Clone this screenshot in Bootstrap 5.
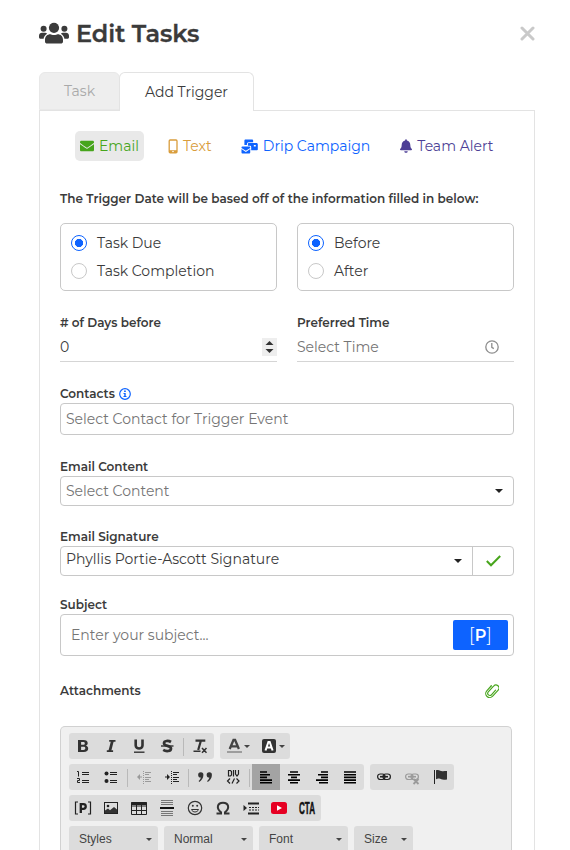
<!DOCTYPE html>
<html lang="en">
<head>
<meta charset="utf-8">
<meta name="viewport" content="width=device-width, initial-scale=1">
<title>Edit Tasks</title>
<link href="https://cdn.jsdelivr.net/npm/bootstrap@5.3.0/dist/css/bootstrap.min.css" rel="stylesheet">
<style>
body{font-family:Montserrat,Inter,"Liberation Sans",sans-serif;font-size:14px;line-height:20px;color:#3b3b3b;background:#fff}
svg{display:block;flex:none}
.page-wrap{width:496px;margin-left:39px}
.head-row{height:72px;padding-top:17px}
.head-row h1{font-size:24px;font-weight:600;line-height:34px;letter-spacing:-.08px;margin:0 0 0 7px;color:#3b3b3b;-webkit-text-stroke:.3px #3b3b3b}
.close-x{margin:9px 0 0;color:#c9c9c9}
.trigger-tabs{height:39px;border:0;position:relative;z-index:1;flex-wrap:nowrap}
.trigger-tabs .nav-link{padding:0;margin:0;height:38px;line-height:37px;text-align:center;border-radius:6px 6px 0 0;border:1px solid #e3e3e3}
.trigger-tabs .tab-task{width:81px;background:#eee;color:#a9a9a9;border-color:#e8e8e8}
.trigger-tabs .tab-add{width:135px;height:39px;line-height:38px;margin-left:-1px;background:#fff;color:#3b3b3b;border-bottom:0}
.panel-box{border:1px solid #e3e3e3;border-bottom:0;margin-top:-1px;padding:20px 20px 0;height:740px}
.kinds{height:30px;margin:0 13px 0 15px;gap:19px}
.kind{height:30px;padding:0 5px;border-radius:5px;white-space:nowrap;text-decoration:none;gap:5px}
.k-email{width:69px;background:#e9e9e9;color:#47a51c}
.k-text{width:54px;color:#d99d3c}
.k-drip{width:140px;color:#0d63ff}
.k-team{width:106px;color:#4d3f96;margin-left:1px}
.lbl{font-size:12px;font-weight:650;line-height:16px;margin:0;white-space:nowrap}
.lead-note{margin-top:30px;letter-spacing:.02px}
.cards-row{margin-top:16px}
.inputs-row{margin-top:24px}
.radio-card{width:217px;height:68px;border:1px solid #c8c8c8;border-radius:5px;padding:5px 10px}
.radio-card .form-check{height:28px;padding:0;margin:0;min-height:0;display:flex;align-items:center;gap:10px}
.radio-card .form-check-input{float:none;margin:0;width:16px;height:16px;border:1px solid #c8c8c8;box-shadow:none}
.radio-card .form-check-input:checked{background-color:#fff;border-color:#0d63ff;background-image:radial-gradient(circle,#0d63ff 0 3.8px,transparent 4.4px)}
.half{width:217px}
.line-field{height:31px;border-bottom:1px solid #d5d5d5}
.line-field .form-control{border:0;padding:2px 0 0;height:28px;background:none}
.line-field svg{margin-top:1px}
.form-control{font-size:14px;line-height:20px;color:#3b3b3b;border-color:#c8c8c8;border-radius:4px;box-shadow:none!important}
.form-control::placeholder{color:#757575;opacity:1}
.spin{width:15px;height:18px;background:#eee}
.field{border:1px solid #c8c8c8;border-radius:4px;padding:0 5px;width:454px;margin-top:1px}
.field .form-control{border:0;padding:0;background:none}
.f-contact{height:32px}
.f-content{height:30px;padding-right:10px}
.f-sign{height:30px;padding-right:0}
.f-subject{height:42px;padding-left:10px}
.gap-a{margin-top:24px}
.gap-b{margin-top:23px}
.gap-c{margin-top:21px}
.att-row{margin-top:27px;height:16px}
.icon-end{margin-right:15px}
.caret-d{width:0;height:0;border:4px solid transparent;border-top-color:#222;border-bottom:0}
.caret-sign{margin-right:10px}
.ok-cell{width:41px;height:28px;border-left:1px solid #c8c8c8}
.sig-text{margin-top:-4px}
.p-btn{width:55px;height:30px;border-radius:2px;background:#0d63ff;color:#fff;font-size:16px;font-weight:650;border:0;padding:0;line-height:28px}
.p-btn span{font-weight:300;font-size:19px}
.editor{width:452px;height:124px;background:#f0f0f0;border:1px solid #d1d1d1;border-bottom:0;border-radius:5px 5px 0 0;padding:6px 8px 0;margin-top:27px;font-family:"Liberation Sans",Arial,sans-serif;font-size:12px;color:#444}
.tb-row{display:flex;gap:6px;margin-bottom:5px;height:26px}
.tb-row:last-child{height:24px;margin:0}
.tb-group{display:flex;background:#dcdcdc;border-radius:3px;height:26px}
.tb{width:28px;height:26px;display:flex;align-items:center;justify-content:center;color:#222}
.tb-wide{width:35px;gap:2px}
.tb-off{opacity:.35}
.tb-on{background:#a3a3a3}
.tb-sep{width:1px;height:18px;background:#b9b9b9;margin:5px 2px 0}
.tb-arrow{width:0;height:0;border:3px solid transparent;border-top-color:#444;border-bottom:0}
.combo{height:24px;display:flex;align-items:center;justify-content:space-between;padding:2px 6px 0 10px;background:#dcdcdc;border-radius:3px 3px 0 0}
.w89{width:89px}.w59{width:59px}
</style>
<script src="https://cdn.jsdelivr.net/npm/bootstrap@5.3.0/dist/js/bootstrap.bundle.min.js"></script>
</head>
<body>
<main class="page-wrap">
  <header class="head-row d-flex align-items-start">
    <svg class="mt-1" width="30" height="24" viewBox="0 0 30 24" fill="#3b3b3b"><circle cx="15" cy="6.800" r="5.100"/><circle cx="4.600" cy="7.700" r="3"/><circle cx="25.400" cy="7.700" r="3"/><path d="M6 20.400v-1.600c0-3.300 2.300-5.500 5.400-5.500.8 0 1.800.8 3.600.8s2.800-.8 3.600-.8c3.100 0 5.400 2.200 5.400 5.500v1.600c0 1.300-1 2.200-2.200 2.200H8.200C7 22.600 6 21.700 6 20.400z"/><path d="M0 16.300v-1.500c0-1.700 1.300-3 3-3h3c.8 0 1.600.3 2.100.9-2 1.100-3.200 2.900-3.500 5.100H1.500c-.8 0-1.500-.7-1.500-1.500zM30 16.300v-1.500c0-1.700-1.300-3-3-3h-3c-.8 0-1.600.3-2.100.9 2 1.100 3.200 2.900 3.500 5.100h3.100c.8 0 1.500-.7 1.500-1.500z"/></svg>
    <h1>Edit Tasks</h1>
    <svg class="close-x ms-auto" width="15" height="15" viewBox="0 0 15 15" fill="none" stroke="currentColor" stroke-width="3" stroke-linecap="round"><path d="M2 2l11 11M13 2L2 13"/></svg>
  </header>
  <nav class="nav nav-tabs trigger-tabs">
    <a class="nav-link tab-task">Task</a>
    <a class="nav-link tab-add">Add Trigger</a>
  </nav>
  <section class="panel-box">
    <div class="kinds d-flex">
      <a class="kind k-email d-flex align-items-center"><svg width="14" height="14" viewBox="0 0 512 512" fill="currentColor"><path d="M502.300 190.800c3.900-3.100 9.700-.2 9.700 4.700V400c0 26.500-21.500 48-48 48H48c-26.500 0-48-21.500-48-48V195.600c0-5 5.700-7.800 9.700-4.700 22.400 17.400 52.100 39.500 154.100 113.600 21.100 15.400 56.700 47.800 92.200 47.600 35.700.3 72-32.800 92.300-47.600 102-74.100 131.600-96.300 154-113.700zM256 320c23.200.4 56.600-29.200 73.400-41.400 132.700-96.300 142.800-104.700 173.400-128.700 5.800-4.500 9.200-11.500 9.200-18.900v-19c0-26.500-21.500-48-48-48H48c-26.500 0-48 21.500-48 48v19c0 7.400 3.400 14.300 9.200 18.900 30.600 23.900 40.700 32.400 173.400 128.700 16.800 12.200 50.200 41.800 73.400 41.400z"/></svg><span>Email</span></a>
      <a class="kind k-text d-flex align-items-center"><svg width="10" height="15" viewBox="0 0 10 15"><rect x="1.200" y="1" width="7.800" height="12.800" rx="1" fill="none" stroke="currentColor" stroke-width="1.300"/><path d="M1 11.200h8v2.800H1z" fill="currentColor"/><circle cx="5" cy="12.500" r=".8" fill="#fff"/></svg><span>Text</span></a>
      <a class="kind k-drip d-flex align-items-center"><svg width="17" height="15" viewBox="-.5 0 17.500 15" fill="currentColor"><path d="M3 6V1.400C3 .7 3.500.2 4.200.2h6.600c.7 0 1.200.5 1.200 1.200V3H7.500C6.200 3 5.600 3.800 5.600 5v1z"/><path fill-rule="evenodd" d="M7.700 4h7.600c.9 0 1.500.6 1.500 1.500v5c0 .5-.4.900-.9.900H10V8.200C10 7.300 9.400 6.800 8.500 6.800H6.600V5.100C6.600 4.400 7 4 7.700 4zm5 2v1.600h2V6z"/><path d="M0 8.500C0 8 .4 7.600.9 7.600h7.200c.5 0 .9.400.9.900v.6L4.500 12 0 9.100zM0 10.200l4.500 2.900L9 10.200v3.600c0 .6-.4 1-.9 1H.9c-.5 0-.9-.4-.9-1z"/></svg><span>Drip Campaign</span></a>
      <a class="kind k-team d-flex align-items-center"><svg width="12" height="14" viewBox="0 0 448 512" fill="currentColor"><path d="M224 512c35.300 0 63.900-28.700 63.900-64H160.100c0 35.300 28.600 64 63.900 64zm215.400-149.700c-19.300-20.800-55.500-52-55.500-154.300 0-77.700-54.500-139.900-127.900-155.200V32c0-17.700-14.300-32-32-32s-32 14.300-32 32v20.800C118.600 68.100 64.100 130.300 64.100 208c0 102.300-36.200 133.500-55.500 154.300-6 6.400-8.700 14.200-8.600 21.700.1 16.400 13 32 32.100 32h383.800c19.100 0 32-15.600 32.100-32 .1-7.500-2.600-15.300-8.600-21.700z"/></svg><span>Team Alert</span></a>
    </div>
    <p class="lbl lead-note">The Trigger Date will be based off of the information filled in below:</p>
    <div class="cards-row d-flex justify-content-between">
      <div class="radio-card">
        <label class="form-check"><input class="form-check-input" type="radio" name="basis" checked><span>Task Due</span></label>
        <label class="form-check"><input class="form-check-input" type="radio" name="basis"><span>Task Completion</span></label>
      </div>
      <div class="radio-card">
        <label class="form-check"><input class="form-check-input" type="radio" name="when" checked><span>Before</span></label>
        <label class="form-check"><input class="form-check-input" type="radio" name="when"><span>After</span></label>
      </div>
    </div>
    <div class="inputs-row d-flex justify-content-between">
      <div class="half"><label class="lbl d-block"># of Days before</label>
        <div class="line-field d-flex align-items-center"><input class="form-control" value="0"><svg class="spin" viewBox="0 0 15 18"><path d="M3.500 7L7.500 3l4 4zM3.500 11l4 4 4-4z" fill="#333"/></svg></div></div>
      <div class="half"><label class="lbl d-block">Preferred Time</label>
        <div class="line-field d-flex align-items-center"><input class="form-control" placeholder="Select Time"><svg class="icon-end" width="14" height="14" viewBox="0 0 14 14" fill="none" stroke="#8d8d8d" stroke-width="1.300"><circle cx="7" cy="7" r="6.200"/><path d="M6.800 3v4.300l2 1.300"/></svg></div></div>
    </div>
    <label class="lbl d-flex align-items-center gap-a"><span>Contacts</span><svg class="ms-1" width="12" height="12" viewBox="0 0 12 12"><circle cx="6" cy="6" r="5.300" fill="none" stroke="#0d63ff" stroke-width="1.200"/><path d="M5.100 2.500h1.700v1.500H5.100zM4.500 5h2.200v3h.8v1.100h-3V8h.8V6.100h-.8z" fill="#0d63ff"/></svg></label>
    <div class="field f-contact d-flex align-items-center"><input class="form-control" placeholder="Select Contact for Trigger Event"></div>
    <label class="lbl d-block gap-a">Email Content</label>
    <div class="field f-content d-flex align-items-center"><input class="form-control" placeholder="Select Content"><i class="caret-d"></i></div>
    <label class="lbl d-block gap-b">Email Signature</label>
    <div class="field f-sign d-flex align-items-center"><span class="flex-grow-1 sig-text">Phyllis Portie-Ascott Signature</span><i class="caret-d caret-sign"></i><span class="ok-cell d-flex align-items-center justify-content-center"><svg width="15" height="12" viewBox="0 0 15 12" fill="none" stroke="#47a51c" stroke-width="2"><path d="M.8 6l4.200 4.300L14.200 1"/></svg></span></div>
    <label class="lbl d-block gap-c">Subject</label>
    <div class="field f-subject d-flex align-items-center"><input class="form-control" placeholder="Enter your subject..."><button class="p-btn flex-shrink-0" type="button"><span>[</span>P<span>]</span></button></div>
    <div class="att-row d-flex justify-content-between align-items-center"><span class="lbl">Attachments</span><svg class="icon-end" width="14" height="16" viewBox="0 0 14 16" fill="none" stroke="#47a51c" stroke-width="1.150" stroke-linecap="round"><g transform="rotate(42 7 8)"><path d="M9.100 5v6.200a2.100 2.100 0 01-4.200 0V3.700M4.900 3.700M3 5.200v6.200a4 4 0 008 0V3.200a3.050 3.050 0 00-6.100 0"/><path d="M3 5.200V4.500"/></g></svg></div>
    <div class="editor">
      <div class="tb-row">
        <div class="tb-group">
          <span class="tb"><svg width="16" height="16" viewBox="0 0 16 16"><path fill="#333" fill-rule="evenodd" d="M3 2h5.500c2.700 0 4.200 1.100 4.200 3.100 0 1.300-.7 2.200-1.900 2.600 1.500.3 2.400 1.300 2.400 2.800 0 2.200-1.600 3.500-4.400 3.500H3zm3.100 2.100v2.700h1.800c1.300 0 1.900-.4 1.900-1.400 0-.9-.6-1.300-1.900-1.300zm0 4.700v3.100h2.200c1.300 0 2-.5 2-1.600s-.7-1.500-2-1.500z"/></svg></span>
          <span class="tb"><svg width="16" height="16" viewBox="0 0 16 16" fill="none" stroke="#333"><path stroke-width="1.700" d="M6.200 2.800h6.300M3.800 13.200h6.300"/><path stroke-width="2.800" d="M9.500 2.500L6.700 13.500"/></svg></span>
          <span class="tb"><svg width="16" height="16" viewBox="0 0 16 16" fill="none" stroke="#333"><path stroke-width="2.600" d="M4.700 1.500v6c0 4 6.800 4 6.800 0v-6"/><path stroke-width="1.400" d="M3 14.200h10.500"/></svg></span>
          <span class="tb"><svg width="16" height="16" viewBox="0 0 16 16" fill="none" stroke="#333"><path stroke-width="2.700" d="M12 4C9.500 2.400 5 2.500 5 5.200c0 3.200 7 2.200 7 5.300 0 3-5 3.200-7.800 1.400"/><path stroke-width="1.400" d="M2 8h12.500"/></svg></span>
          <i class="tb-sep"></i>
          <span class="tb"><svg width="16" height="16" viewBox="0 0 16 16" fill="none" stroke="#333"><path stroke-width="2.200" d="M3.500 2.600h9.800M8.800 3L6.200 12"/><path stroke-width="1.500" d="M1.500 13.200h7M10 10l4.500 4.800M14.500 10L10 14.800"/></svg></span>
        </div>
        <div class="tb-group">
          <span class="tb tb-wide"><svg width="16" height="16" viewBox="0 0 16 16"><path d="M3.700 11L7.500 2h1.600l3.800 9M5.400 8.300h5.700" fill="none" stroke="#444" stroke-width="2.300"/><path d="M1 14h15" stroke="#888" stroke-width="1.500"/></svg><i class="tb-arrow"></i></span>
          <span class="tb tb-wide"><svg width="16" height="16" viewBox="0 0 16 16"><rect x="1" y="1" width="14" height="14" rx="2" fill="#333"/><path d="M4.500 12.500L7.400 4h1.300l2.900 8.500M5.700 9.600h4.600" fill="none" stroke="#fff" stroke-width="2"/></svg><i class="tb-arrow"></i></span>
        </div>
      </div>
      <div class="tb-row">
        <div class="tb-group">
          <span class="tb"><svg width="16" height="16" viewBox="0 0 16 16" fill="none" stroke="#222"><path d="M7 3.500h7M7 5.500h7M7 11.500h7M7 13.500h7M2 2.500h1.500v5M2 9.500h2.500v2h-2v2H5"/></svg></span>
          <span class="tb"><svg width="16" height="16" viewBox="0 0 16 16"><circle cx="3.500" cy="4.500" r="2" fill="#222"/><circle cx="3.500" cy="12" r="2" fill="#222"/><path d="M7 3.500h7M7 5.500h7M7 11.500h7M7 13.500h7" stroke="#222"/></svg></span>
          <i class="tb-sep"></i>
          <span class="tb tb-off"><svg width="16" height="16" viewBox="0 0 16 16" fill="none" stroke="#222"><path d="M9 3.500h6M9 5.500h4M9 8.500h6M9 10.500h4M9 12.500h6M2 8h4"/><path d="M7.500 2v13" stroke-dasharray="1 1"/><path fill="#222" stroke="none" d="M1 8l3-3v6z"/></svg></span>
          <span class="tb"><svg width="16" height="16" viewBox="0 0 16 16" fill="none" stroke="#222"><path d="M9 3.500h6M9 5.500h4M9 8.500h6M9 10.500h4M9 12.500h6M1 8h4"/><path d="M7.500 2v13" stroke-dasharray="1 1"/><path fill="#222" stroke="none" d="M6 8L3 5v6z"/></svg></span>
          <i class="tb-sep"></i>
          <span class="tb"><svg width="16" height="16" viewBox="0 0 16 16" fill="#333"><path d="M3.700 3.300a2.600 2.600 0 012.700 2.700c0 3-1.800 5.600-4.200 6.900l-.6-.8c1.300-1.100 2-2.300 2.200-3.600A2.600 2.600 0 113.700 3.300z"/><path d="M12.200 3.300a2.600 2.600 0 012.700 2.700c0 3-1.800 5.600-4.200 6.900l-.6-.8c1.300-1.100 2-2.300 2.200-3.600a2.600 2.600 0 11-.1-5.200z"/></svg></span>
          <span class="tb"><svg width="16" height="16" viewBox="0 0 16 16" fill="none" stroke="#222" stroke-width="1.200"><path d="M3.500 1v6h2l1-1V2.500l-1-1h-2M8.500 1v6.500M10.500 1v4l1.500 2 1.500-2V1M5 9.500L2.500 12 5 14.500M11.500 9.500L14 12l-2.500 2.500M9.500 9.500L7 14.500"/></svg></span>
          <i class="tb-sep"></i>
          <span class="tb tb-on"><svg width="16" height="16" viewBox="0 0 16 16" stroke="#000" stroke-width="1.600"><path d="M2 3h7M2 5.700h10M2 8.400h7M2 11.100h12M2 13.800h12"/></svg></span>
          <span class="tb"><svg width="16" height="16" viewBox="0 0 16 16" stroke="#000" stroke-width="1.600"><path d="M4 3h8M2 5.700h12M5 8.400h6M2 11.100h12M4 13.800h8"/></svg></span>
          <span class="tb"><svg width="16" height="16" viewBox="0 0 16 16" stroke="#000" stroke-width="1.600"><path d="M7 3h7M4 5.700h10M7 8.400h7M2 11.100h12M5 13.800h9"/></svg></span>
          <span class="tb"><svg width="16" height="16" viewBox="0 0 16 16" stroke="#000" stroke-width="1.600"><path d="M2 3h12M2 5.700h12M2 8.400h12M2 11.100h12M2 13.800h12"/></svg></span>
        </div>
        <div class="tb-group">
          <span class="tb"><svg width="16" height="16" viewBox="0 0 16 16" fill="none" stroke="#222" stroke-width="1.200"><rect x="1.600" y="5" width="7.400" height="5.500" rx="2.700"/><rect x="7" y="5" width="7.400" height="5.500" rx="2.700"/><path d="M4 7.700h8" stroke-width="1.600"/></svg></span>
          <span class="tb tb-off"><svg width="16" height="16" viewBox="0 0 16 16" fill="none" stroke="#222" stroke-width="1.200"><rect x="1.600" y="5" width="7.400" height="5.500" rx="2.700"/><rect x="7" y="5" width="7.400" height="5.500" rx="2.700"/><path d="M4 7.700h8" stroke-width="1.600"/><path d="M9.500 10l5 5M14.500 10l-5 5" stroke-width="1.800"/></svg></span>
          <span class="tb"><svg width="16" height="16" viewBox="0 0 16 16"><path d="M2.500 1v14" stroke="#222"/><path fill="#333" d="M4 1.300c3.500-1.200 4.500 1.400 7 .9.900-.1 2.300-.1 4-.2v8.400c-2.300.4-3.500.4-5 .2-2.500-.9-3.500-1.500-6-.4z"/></svg></span>
        </div>
      </div>
      <div class="tb-row">
        <div class="tb-group">
          <span class="tb"><svg width="18" height="16" viewBox="0 0 18 16" fill="none" stroke="#222"><path d="M4 2H1.500v12H4M14 2h2.500v12H14" stroke-width="1.200"/><path stroke-width="2.300" d="M6.800 13V4.200h2.600c3.100 0 3.100 4.600 0 4.600H7"/></svg></span>
          <span class="tb"><svg width="16" height="16" viewBox="0 0 16 16"><rect x="1.500" y="2.500" width="13" height="11" fill="none" stroke="#222"/><circle cx="5" cy="6" r="1.300" fill="#222"/><path d="M2 13V10.500l3-2 2 1.800 4-3.300 3 2.500V13z" fill="#333"/></svg></span>
          <span class="tb"><svg width="16" height="16" viewBox="0 0 16 16" fill="none" stroke="#222"><path d="M.5 2.500h15v12H.5zM.5 6h15M.5 10.500h15M5.500 5v9M10.500 5v9"/><path d="M.5 3.500h15" stroke-width="3"/></svg></span>
          <span class="tb"><svg width="16" height="16" viewBox="0 0 16 16" fill="none" stroke="#777"><path d="M2 .5h12M2 2.500h12M2 4.500h12M2 11.500h12M2 13.500h12M2 15.500h12"/><path d="M1 8h14" stroke="#111" stroke-width="2"/></svg></span>
          <span class="tb"><svg width="16" height="16" viewBox="0 0 16 16" fill="none" stroke="#333"><circle cx="8" cy="8" r="6.700" stroke-width="1.200"/><path d="M4.500 9.500c1 3.300 6 3.300 7 0z" stroke-width="1"/><circle cx="5.800" cy="5.800" r="1" fill="#333" stroke="none"/><circle cx="10.200" cy="5.800" r="1" fill="#333" stroke="none"/></svg></span>
          <span class="tb"><svg width="16" height="16" viewBox="0 0 16 16" fill="none" stroke="#333" stroke-width="2"><path d="M1.500 13.500H6v-1.300C1 8.500 2.200 2.700 8 2.700s7 5.800 2 9.500v1.300h4.500"/></svg></span>
          <span class="tb"><svg width="16" height="16" viewBox="0 0 16 16" fill="none" stroke="#222"><path d="M5 3.500h11M5 13.500h11" stroke-width="1.800"/><path d="M6 7.500h10M6 10h10" stroke-dasharray="2 1" stroke-width="1.200"/><path d="M.5 5v6L4 8z" fill="#222" stroke="none"/></svg></span>
          <span class="tb"><svg width="16" height="12" viewBox="0 0 16 12"><rect width="16" height="12" rx="2.500" fill="#e60023"/><path d="M6 3.300v5.400L11 6z" fill="#fff"/></svg></span>
          <span class="tb"><svg width="28" height="26" viewBox="0 0 28 26"><text x="6" y="19" font-family="Liberation Sans" font-size="17" font-weight="700" textLength="16" lengthAdjust="spacingAndGlyphs" fill="#111" stroke="#111" stroke-width=".5">CTA</text></svg></span>
        </div>
      </div>
      <div class="tb-row">
        <div class="combo w89">Styles<i class="tb-arrow"></i></div>
        <div class="combo w89">Normal<i class="tb-arrow"></i></div>
        <div class="combo w89">Font<i class="tb-arrow"></i></div>
        <div class="combo w59">Size<i class="tb-arrow"></i></div>
      </div>
    </div>
  </section>
</main>
</body>
</html>
